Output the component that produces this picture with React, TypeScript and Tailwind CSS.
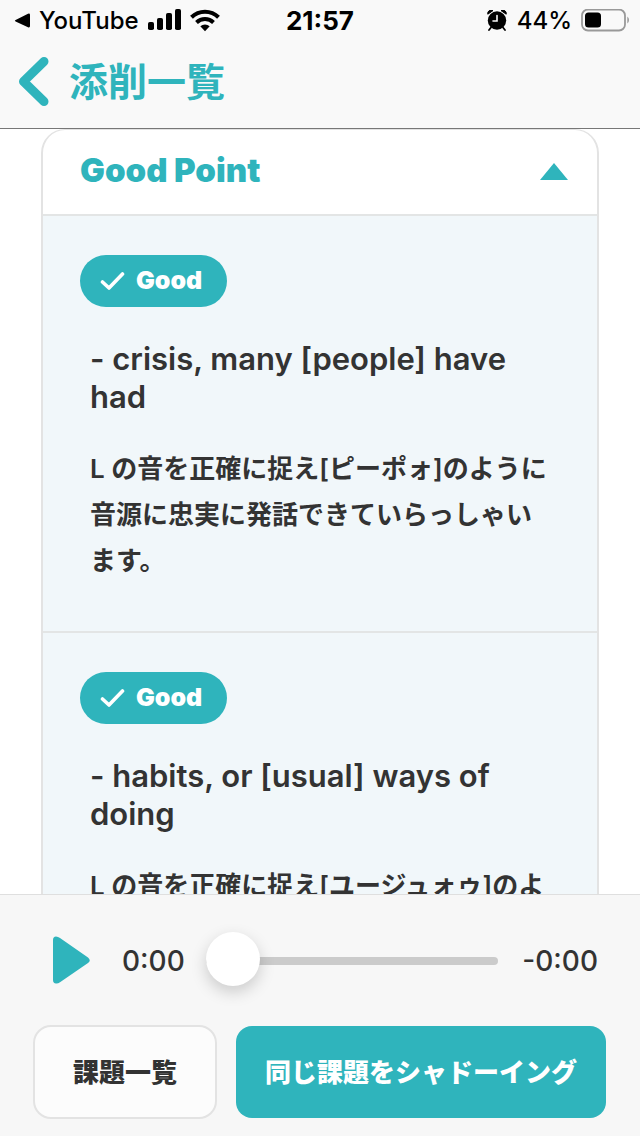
import { useState } from 'react';

interface Feedback {
  id: number;
  phrase: string;
  comment: string;
}

const feedbacks: Feedback[] = [
  {
    id: 1,
    phrase: '- crisis, many [people] have had',
    comment: 'L の音を正確に捉え[ピーポォ]のように音源に忠実に発話できていらっしゃいます。',
  },
  {
    id: 2,
    phrase: '- habits, or [usual] ways of doing',
    comment: 'L の音を正確に捉え[ユージュォゥ]のよ',
  },
];

function StatusBar() {
  return (
    <div className="grid h-[42px] grid-cols-[1fr_auto_1fr] items-center px-[10px] text-2xl text-black">
      <div className="flex items-center pl-1">
        <svg viewBox="0 0 17 16" className="h-4 w-[17px]" aria-hidden="true">
          <path d="M1.6 7 L14 .8 Q16 0 16 2 V13 Q16 15 14 14.2 L1.6 8.6 Q0 7.8 1.6 7Z" />
        </svg>
        <span className="ml-2 font-medium">YouTube</span>
        <svg viewBox="0 0 34 24" className="ml-[9px] h-6 w-[34px]" aria-hidden="true">
          <rect x="0" y="13" width="6" height="8" rx="1.8" />
          <rect x="9" y="9" width="6" height="12" rx="1.8" />
          <rect x="18" y="4" width="6" height="17" rx="1.8" />
          <rect x="27" y="0" width="6" height="21" rx="1.8" />
        </svg>
        <svg viewBox="0 0 30 24" className="ml-2 h-6 w-[30px]" fill="none" stroke="#000" strokeWidth="4" aria-hidden="true">
          <path d="M1.5 8.3 A19.3 19.3 0 0 1 28.5 8.3" />
          <path d="M6.5 13.5 A12.3 12.3 0 0 1 23.5 13.5" />
          <path d="M10.3 17.3 A7 7 0 0 1 19.7 17.3 L15 22.3Z" fill="#000" stroke="none" />
        </svg>
      </div>
      <span className="text-[26px] font-bold">21:57</span>
      <div className="flex items-center justify-end">
        <svg viewBox="0 1 20 22" className="h-[22px] w-5" aria-hidden="true">
          <circle cx="10" cy="11.5" r="9.2" />
          <path d="M.8 5.2 A3.4 3.4 0 0 1 6 1.6Z M19.2 5.2 A3.4 3.4 0 0 0 14 1.6Z" stroke="#000" strokeWidth="1" strokeLinejoin="round" />
          <path d="M4 18.5 L2 21 M16 18.5 L18 21" stroke="#000" strokeWidth="1.8" strokeLinecap="round" />
          <path d="M10 6.5 V12 H6" fill="none" stroke="#f9f9f9" strokeWidth="1.6" strokeLinecap="round" />
        </svg>
        <span className="ml-[10px] font-medium">44%</span>
        <svg viewBox="0 1 49 24" className="ml-[9px] h-6 w-[49px]" aria-hidden="true">
          <rect x="1" y="1.5" width="43" height="21" rx="6" fill="none" stroke="#999" strokeWidth="1.8" />
          <rect x="4" y="4.5" width="16" height="15" rx="3.5" />
          <path d="M46.3 8.500 Q48 9.500 48 12 Q48 14.500 46.3 15.500Z" fill="#999" />
        </svg>
      </div>
    </div>
  );
}

function FeedbackItem({ phrase, comment }: Feedback) {
  return (
    <li className="border-t-2 border-[#e3e5e5] bg-[#f1f7fa] px-[37px] pb-[47px] pt-[39px]">
      <span className="inline-flex h-[52px] items-center rounded-full bg-[#2fb4bc] pl-5 pr-[25px] text-[25px] font-black text-white">
        <svg viewBox="0 0 26 20" className="mr-[10px] h-5 w-[26px]" aria-hidden="true">
          <path d="M2.5 11 L9 17 L22.5 3" fill="none" stroke="#fff" strokeWidth="3.6" strokeLinecap="round" strokeLinejoin="round" />
        </svg>
        Good
      </span>
      <div className="mt-[33px] px-[10px] text-[#333]">
        <h3 className="text-[31px] font-semibold leading-[38px]">{phrase}</h3>
        <p className="mt-[30px] text-[26px] font-semibold leading-[46px]">{comment}</p>
      </div>
    </li>
  );
}

function Player() {
  const [position, setPosition] = useState(0);

  return (
    <div className="flex h-[130px] items-center pl-[53px] pr-[42px] pt-[2px] text-[28px] font-medium text-[#333]">
      <button type="button" aria-label="再生" className="shrink-0">
        <svg viewBox="0 1 37 48" className="h-12 w-[37px] overflow-visible fill-[#2fb4bc]">
          <path d="M0 4 Q0 .5 3 .5 Q5 .5 7 2 L35 21.5 Q38.5 24.5 35 27 L7 46.3 Q5 47.7 3 47.5 Q0 47.2 0 44Z" />
        </svg>
      </button>
      <span className="ml-8 w-[84px] shrink-0">0:00</span>
      <input
        type="range"
        min={0}
        max={100}
        value={position}
        onChange={(e) => setPosition(Number(e.target.value))}
        aria-label="再生位置"
        className="h-[54px] min-w-0 flex-1 appearance-none bg-transparent [&::-webkit-slider-runnable-track]:h-2 [&::-webkit-slider-runnable-track]:rounded-full [&::-webkit-slider-runnable-track]:bg-[#cbcbcb] [&::-webkit-slider-thumb]:-mt-[25px] [&::-webkit-slider-thumb]:h-[54px] [&::-webkit-slider-thumb]:w-[54px] [&::-webkit-slider-thumb]:appearance-none [&::-webkit-slider-thumb]:rounded-full [&::-webkit-slider-thumb]:bg-white [&::-webkit-slider-thumb]:shadow-[0_6px_16px_rgba(0,0,0,0.18)]"
      />
      <span className="ml-6 shrink-0">-0:00</span>
    </div>
  );
}

export default function App() {
  const [open, setOpen] = useState(true);

  return (
    <div className="flex h-screen flex-col bg-white font-['Inter','Noto_Sans_CJK_JP',sans-serif]">
      <header className="shrink-0 border-b border-[#777] bg-[#f9f9f9]">
        <StatusBar />
        <a href="#list" className="flex h-[86px] items-center pb-[6px] pl-[18px] text-[39px] font-bold text-[#2fb4bc]">
          <svg viewBox="0 0 32 50" className="mr-[19px] h-[50px] w-8" aria-hidden="true">
            <path d="M26 4.500 L5.500 24.500 L26 44.500" fill="none" stroke="#2fb4bc" strokeWidth="9" strokeLinecap="round" strokeLinejoin="round" />
          </svg>
          添削一覧
        </a>
      </header>

      <main className="min-h-0 flex-1 overflow-hidden px-[41px]">
        <section className="overflow-hidden rounded-t-3xl border-2 border-t border-[#e3e3e3]">
          <h2>
            <button
              type="button"
              aria-expanded={open}
              onClick={() => setOpen(!open)}
              className="flex h-[84px] w-full items-center justify-between pb-[2px] pl-[37px] pr-[29px] text-[33px] font-black text-[#2fb4bc]"
            >
              Good Point
              <svg viewBox="0 0 28 17" className="h-[17px] w-7 fill-[#2fb4bc]" aria-hidden="true">
                <path d="M14 0 L28 17 H0Z" />
              </svg>
            </button>
          </h2>
          {open && (
            <ul>
              {feedbacks.map((item) => (
                <FeedbackItem key={item.id} {...item} />
              ))}
            </ul>
          )}
        </section>
      </main>

      <footer className="shrink-0 border-t border-[#dfdfdf] bg-[#f7f7f7]">
        <Player />
        <div className="flex items-center gap-[19px] pb-[17px] pl-[33px] pr-[34px] text-[26px] font-black">
          <button type="button" className="h-[94px] w-[184px] shrink-0 rounded-[18px] border-2 border-[#e3e3e3] bg-[#fcfcfc] text-[#333]">
            課題一覧
          </button>
          <button type="button" className="h-[92px] flex-1 rounded-2xl bg-[#2fb4bc] text-white">
            同じ課題をシャドーイング
          </button>
        </div>
      </footer>
    </div>
  );
}
